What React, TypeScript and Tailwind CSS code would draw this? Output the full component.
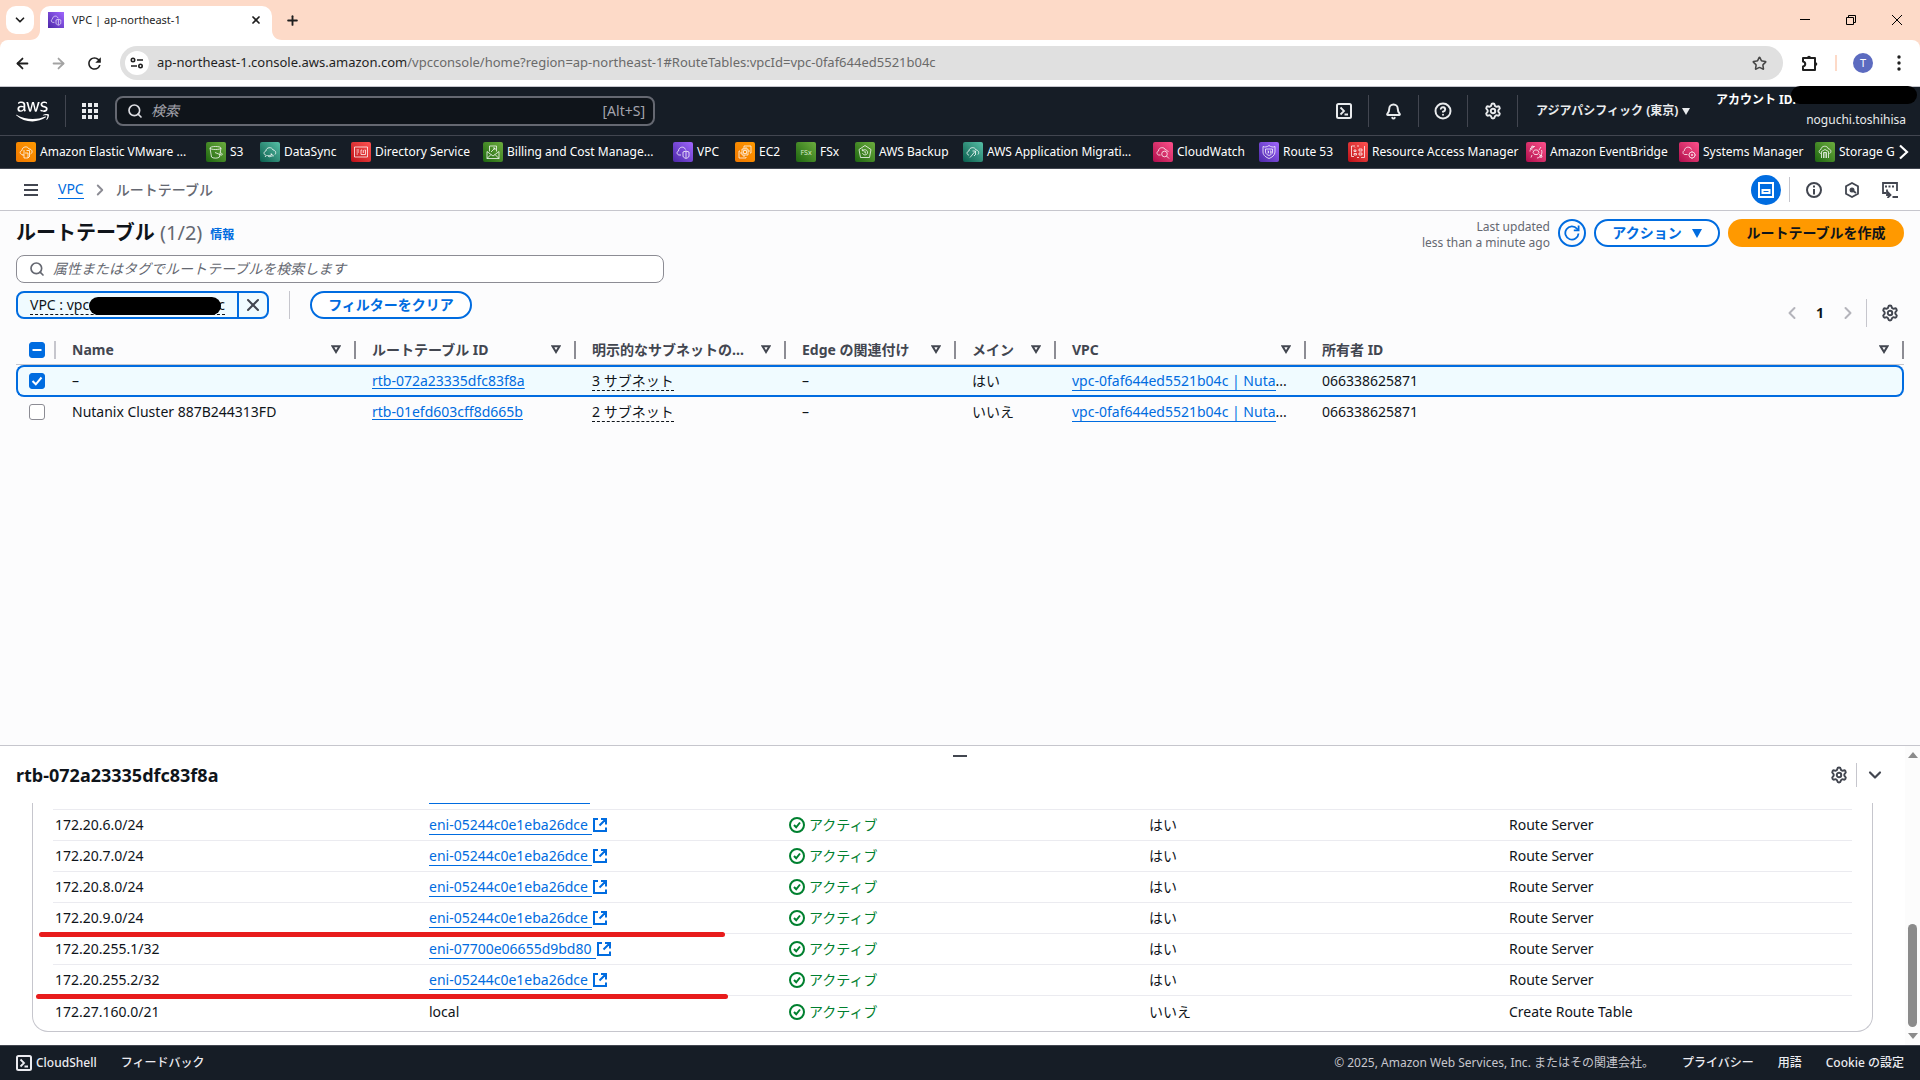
import React from "react";
import {
  ArrowLeft,
  ArrowRight,
  Bell,
  ChevronDown,
  ChevronLeft,
  ChevronRight,
  CircleHelp,
  Plus,
  Search,
  Settings,
  Star,
  X,
} from "lucide-react";
import { FaAws } from "react-icons/fa6";
import { MdRefresh } from "react-icons/md";
import clsx from "clsx";

const ORANGE = "from-[#f07800] to-[#ff9900]";
const GREEN = "from-[#1b660f] to-[#6cae3e]";
const TEAL = "from-[#055f4e] to-[#56c0a7]";
const RED = "from-[#bd0816] to-[#ff5252]";
const PURPLE = "from-[#4d27a8] to-[#a166ff]";
const PINK = "from-[#b0084d] to-[#ff4f8b]";

const CLOUD = "M6 13H5.5C3.5 12.5 3.5 9.500 6 9C6 5 12 4.500 13 8C15.500 8 16.500 11 15 12.500";

const services = [
  {
    name: "Amazon Elastic VMware ...",
    color: ORANGE,
    width: "w-[190px]",
    glyph: (
      <>
        <path d="M6.500 12.500H6C3.500 12 3.500 9 6 8.500C6 4.500 11.500 3.500 13 7C16.500 7 17 11 14.500 12" />
        <path d="M8 8V16H12V11H9M10.500 8.500H13.500V14M8 13H6M12 16L14 14" />
      </>
    ),
  },
  {
    name: "S3",
    color: GREEN,
    width: "w-[54px]",
    glyph: (
      <>
        <path d="M4 6C4 4 15 4 15 6C15 8 4 8 4 6ZM4 6L5.500 15C6.500 16.500 12.500 16.500 13.500 15L15 6" />
        <path d="M9 10.500L15 13C17 13.500 16.500 11.500 14.500 10.500" />
      </>
    ),
  },
  {
    name: "DataSync",
    color: TEAL,
    width: "w-[91px]",
    glyph: (
      <>
        <path d={CLOUD} />
        <path d="M5 15C7 11.500 9 16 12 12M10.500 12H12V13.500M8 14C10 16 12 13 14 14" />
      </>
    ),
  },
  {
    name: "Directory Service",
    color: RED,
    width: "w-[132px]",
    glyph: (
      <>
        <path d="M3.500 5H16.500V15H3.500ZM5.500 8H8M5.500 10H8M5.500 12H7" />
        <path d="M10 8V12.500H14.500V8M12.300 8V11M10 8H11M14.500 8H13.500" />
      </>
    ),
  },
  {
    name: "Billing and Cost Manage...",
    color: GREEN,
    width: "w-[190px]",
    glyph: (
      <>
        <path d="M4 9.500V16.500H16V9.500L10 14ZM4 16.500L8 12.500M16 16.500L12 12.500" />
        <path d="M6.500 9.500V4H13.500V9.500M8 10L12 6M10 6H12V8" />
      </>
    ),
  },
  {
    name: "VPC",
    color: PURPLE,
    width: "w-[62px]",
    glyph: (
      <>
        <path d="M8 13H6C3.500 12.500 3.500 9.500 5.500 9C5.500 5 11 3.500 12.500 7.500" />
        <path d="M10 10L13 9L16 10V14C16 15.500 14 16 13 16.500C12 16 10 15.500 10 14ZM13 9V16" />
      </>
    ),
  },
  {
    name: "EC2",
    color: ORANGE,
    width: "w-[61px]",
    glyph: (
      <>
        <path d="M7 7H13V13H7ZM8.500 8.500H11.500V11.500H8.500Z" />
        <path d="M9 5V4H16V11H15M5 9H4V16H11V15M9 5V7M11 5V7M5 11H7M9 13V15M13 9H15" />
      </>
    ),
  },
  {
    name: "FSx",
    color: GREEN,
    width: "w-[59px]",
    glyph: (
      <text x="10" y="12.500" textAnchor="middle" fontSize="7" fill="#d5e9c8" stroke="none">
        FSx
      </text>
    ),
  },
  {
    name: "AWS Backup",
    color: GREEN,
    width: "w-[108px]",
    glyph: (
      <>
        <path d="M10 3.500L16 7.500L14.500 15.500H5.500L4 7.500Z" />
        <path d="M7.500 8.500C10 6.500 13 8.500 12.500 11C12 13.500 8 13.500 7.500 11M7.300 6.800V8.800H9.300M10 9V11H11" />
      </>
    ),
  },
  {
    name: "AWS Application Migrati...",
    color: TEAL,
    width: "w-[190px]",
    glyph: (
      <>
        <path d={CLOUD} />
        <path d="M7 15.500L12 9.500M9.500 9H12.500V12M11 14L13 12" />
      </>
    ),
  },
  {
    name: "CloudWatch",
    color: PINK,
    width: "w-[106px]",
    glyph: (
      <>
        <path d="M7.500 13H5.500C3.500 12.500 3.500 9.500 5.500 9C5.500 5 11.500 4.500 12.500 8C14 8 15 9 15.300 10" />
        <circle cx="11.500" cy="12" r="2.800" />
        <path d="M13.500 14L16 16.500" />
      </>
    ),
  },
  {
    name: "Route 53",
    color: PURPLE,
    width: "w-[89px]",
    glyph: (
      <>
        <path d="M4 4.500C6 5.500 8 5 10 3.500C12 5 14 5.500 16 4.500V10C16 13.500 12.500 15.500 10 16.500C7.500 15.500 4 13.500 4 10Z" />
        <path d="M6.500 7H13.500V10C13.500 12 11.500 13 10 13.500C8.500 13 6.500 12 6.500 10ZM8.500 9H9.500V11H8.500M11 9H12V11H11" />
      </>
    ),
  },
  {
    name: "Resource Access Manager",
    color: RED,
    width: "w-[178px]",
    glyph: (
      <>
        <path d="M3.500 14.500V4H7M16.500 4V15.500H13M9 4H11M3.500 14.500H6M9 15.500H11" />
        <path d="M6 8H8V9.500H6ZM11 7H14V9H11ZM11 11H14V13H11ZM6 11.500H8.500V13H6ZM7 6V5.500" />
      </>
    ),
  },
  {
    name: "Amazon EventBridge",
    color: PINK,
    width: "w-[153px]",
    glyph: (
      <>
        <path d="M8.500 8H11.500L13 10.300L11.500 12.500H8.500L7 10.300Z" />
        <path d="M4 6L6.500 8M6 13L5 15.500M15 5L13 8M13 12.500L16 14M9 4.500C6 4 4 7 4 9.500M15.500 8C17 12 14 16 11 16" />
        <circle cx="6.500" cy="5" r="1" />
        <circle cx="15" cy="14.500" r="1" />
      </>
    ),
  },
  {
    name: "Systems Manager",
    color: PINK,
    width: "w-[136px]",
    glyph: (
      <>
        <path d="M8.500 12.500H5.500C3.500 12 3.500 9 5.500 8.500C5.500 4.500 11.500 4 12.500 7.500" />
        <circle cx="13" cy="13" r="3" />
        <path d="M13 9V10M13 16V17M9.500 13H10M16 13H17M12 13H14M13 12V14" />
      </>
    ),
  },
  {
    name: "Storage G",
    color: GREEN,
    width: "w-[80px]",
    glyph: (
      <>
        <path d="M6 11.500C3.500 11 3.500 8 6 7.500C6 3.500 12.500 3 13.500 7C16.500 7 16.500 11 14.500 11.500" />
        <path d="M6.500 16V9.500L10 7.500L13.500 9.500V16M8.500 16V10.500H11.500V16M10 10.500V16" />
      </>
    ),
  },
];

const columns = [
  { label: "Name", width: "w-[300px]" },
  { label: "ルートテーブル ID", width: "w-[220px]" },
  { label: "明示的なサブネットの…", width: "w-[210px]" },
  { label: "Edge の関連付け", width: "w-[170px]" },
  { label: "メイン", width: "w-[100px]" },
  { label: "VPC", width: "w-[250px]" },
  { label: "所有者 ID", width: "" },
];

const routeTables = [
  { name: "–", id: "rtb-072a23335dfc83f8a", subnets: "3 サブネット", main: "はい", selected: true },
  {
    name: "Nutanix Cluster 887B244313FD",
    id: "rtb-01efd603cff8d665b",
    subnets: "2 サブネット",
    main: "いいえ",
    selected: false,
  },
];

const routes = [
  { dest: "172.20.6.0/24", target: "eni-05244c0e1eba26dce" },
  { dest: "172.20.7.0/24", target: "eni-05244c0e1eba26dce" },
  { dest: "172.20.8.0/24", target: "eni-05244c0e1eba26dce" },
  { dest: "172.20.9.0/24", target: "eni-05244c0e1eba26dce" },
  { dest: "172.20.255.1/32", target: "eni-07700e06655d9bd80" },
  { dest: "172.20.255.2/32", target: "eni-05244c0e1eba26dce" },
  { dest: "172.27.160.0/21", target: "local" },
];

function ServiceIcon({ color, glyph, className }: { color: string; glyph: React.ReactNode; className?: string }) {
  return (
    <span className={clsx("block shrink-0 bg-linear-to-tr", color, className ?? "size-5 rounded-xs")}>
      <svg viewBox="0 0 20 20" className="size-full" fill="none" stroke="#fff" strokeOpacity="0.85" strokeWidth="0.9">
        {glyph}
      </svg>
    </span>
  );
}

function TerminalIcon({ className }: { className: string }) {
  return (
    <svg viewBox="0 0 16 16" className={className} fill="none" stroke="currentColor" strokeWidth="2">
      <rect x="1" y="1" width="14" height="14" rx="1.500" />
      <path d="M4.500 4.500L8 8L4.500 11.500M8.500 11.500H12" strokeWidth="1.800" />
    </svg>
  );
}

function RefreshIcon() {
  return (
    <svg viewBox="0 0 16 16" className="size-4" fill="none" stroke="currentColor" strokeWidth="1.800">
      <path d="M14.500 8.500A6.600 6.600 0 1 1 13 3.800L14 5" />
      <path d="M14.600 0.500V5.300H9.800" />
    </svg>
  );
}

function ExternalIcon() {
  return (
    <svg viewBox="0 0 16 16" className="size-4" fill="none" stroke="currentColor" strokeWidth="2">
      <path d="M6 2H2V14H14V10.500M9 2H14V7.500M14 2L7.500 8.500" />
    </svg>
  );
}

function StatusIcon() {
  return (
    <svg viewBox="0 0 16 16" className="size-4" fill="none" stroke="currentColor" strokeWidth="2">
      <circle cx="8" cy="8" r="7" />
      <path d="M5 8L7.200 10.300L11 5.500" />
    </svg>
  );
}

function BrowserChrome() {
  return (
    <header className="bg-[#fddac8] text-[#1f1f1f]">
      <div className="flex h-10 items-end">
        <button aria-label="タブを検索" className="mx-1.5 mb-1.5 flex size-7 items-center justify-center rounded-[10px] bg-white">
          <ChevronDown size={14} strokeWidth={3} />
        </button>
        <div className="relative flex h-[34px] w-[232px] items-center rounded-t-[10px] bg-white pr-2 pb-1.5 pl-2">
          <svg viewBox="0 0 10 10" className="absolute bottom-0 -left-[10px] size-[10px]" fill="#fff">
            <path d="M10 0V10H0C6 10 10 6 10 0Z" />
          </svg>
          <svg viewBox="0 0 10 10" className="absolute -right-[10px] bottom-0 size-[10px]" fill="#fff">
            <path d="M0 0V10H10C4 10 0 6 0 0Z" />
          </svg>
          <ServiceIcon color={PURPLE} glyph={services[5].glyph} className="size-4" />
          <span className="ml-2 flex-1 text-[11px]">VPC | ap-northeast-1</span>
          <button aria-label="閉じる" className="flex size-4 items-center justify-center">
            <X size={12} strokeWidth={3.5} />
          </button>
        </div>
        <button aria-label="新しいタブ" className="mb-3 ml-3 flex size-4 items-center justify-center">
          <Plus size={15} strokeWidth={3} />
        </button>
        <div className="ml-auto flex h-10 items-center text-black">
          <button aria-label="最小化" className="flex w-[46px] justify-center">
            <svg viewBox="0 0 10 10" className="size-[10px]" stroke="currentColor">
              <path d="M0 4.500H10" />
            </svg>
          </button>
          <button aria-label="元に戻す" className="flex w-[46px] justify-center">
            <svg viewBox="0 0 10 10" className="size-[10px]" fill="none" stroke="currentColor">
              <path d="M0.500 2.500H7.500V9.500H0.500ZM2.500 2.500V0.500H9.500V7.500H7.500" />
            </svg>
          </button>
          <button aria-label="ウィンドウを閉じる" className="flex w-[46px] justify-center">
            <svg viewBox="0 0 10 10" className="size-[10px]" stroke="currentColor">
              <path d="M0 0L10 10M10 0L0 10" />
            </svg>
          </button>
        </div>
      </div>
      <div className="flex h-[46px] items-center rounded-t-lg bg-white pr-3 pl-[13px]">
        <button aria-label="戻る" className="flex w-[19px] justify-center">
          <ArrowLeft size={17} strokeWidth={2.5} />
        </button>
        <button aria-label="進む" className="ml-[17px] flex w-[19px] justify-center text-[#a3a3a3]">
          <ArrowRight size={17} strokeWidth={2.5} />
        </button>
        <button aria-label="再読み込み" className="ml-[17px] flex w-[19px] justify-center">
          <MdRefresh size={19} />
        </button>
        <div className="ml-4 flex h-[34px] flex-1 items-center rounded-full bg-[#e0e0e0] pr-4 pl-[5px]">
          <span className="flex size-6 items-center justify-center rounded-full bg-white">
            <svg viewBox="0 0 14 14" className="size-[14px]" fill="none" stroke="currentColor" strokeWidth="1.600">
              <circle cx="3" cy="4" r="1.700" />
              <circle cx="10.500" cy="10" r="1.700" />
              <path d="M7 4H13M1 10H7" />
            </svg>
          </span>
          <p className="ml-2 flex-1 text-[13px] text-[#6a6a6a]">
            <span className="text-[#1f1f1f]">ap-northeast-1.console.aws.amazon.com</span>
            /vpcconsole/home?region=ap-northeast-1#RouteTables:vpcId=vpc-0faf644ed5521b04c
          </p>
          <button aria-label="ブックマーク" className="text-[#474747]">
            <Star size={15} strokeWidth={2.5} />
          </button>
        </div>
        <button aria-label="拡張機能" className="ml-[18px]">
          <svg viewBox="0 0 18 18" className="size-[18px]" fill="none" stroke="currentColor" strokeWidth="2" strokeLinejoin="round">
            <path d="M2 4H14V16H2V12.500C5 12 5 8 2 7.500Z" />
            <path d="M6 4C6 1 10 1 10 4ZM14 8C17 8 17 12 14 12Z" fill="currentColor" stroke="none" />
          </svg>
        </button>
        <span className="ml-4 h-4 w-0.5 bg-[#fddac8]" />
        <button className="ml-4 flex size-5 items-center justify-center rounded-full bg-[#5c6bc0] text-[11px] text-white">T</button>
        <button aria-label="メニュー" className="ml-[17px] flex w-[18px] justify-center">
          <svg viewBox="0 0 4 16" className="h-4 w-1" fill="currentColor">
            <circle cx="2" cy="2" r="1.700" />
            <circle cx="2" cy="8" r="1.700" />
            <circle cx="2" cy="14" r="1.700" />
          </svg>
        </button>
      </div>
    </header>
  );
}

function AwsNav() {
  return (
    <nav className="border-t border-[#c6c6cd] bg-[#161d26] text-[#e9ebed]">
      <div className="relative flex h-12 items-center">
        <a href="#home" aria-label="AWS" className="ml-4 text-white">
          <FaAws size={33} />
        </a>
        <span className="ml-4 h-8 w-px bg-[#424650]" />
        <button aria-label="サービス" className="ml-4">
          <svg viewBox="0 0 16 16" className="size-4" fill="#e9ebed">
            <path d="M0 0H4V4H0ZM6 0H10V4H6ZM12 0H16V4H12ZM0 6H4V10H0ZM6 6H10V10H6ZM12 6H16V10H12ZM0 12H4V16H0ZM6 12H10V16H6ZM12 12H16V16H12Z" />
          </svg>
        </button>
        <label className="ml-[17px] flex h-[30px] w-[540px] items-center rounded-lg border-2 border-[#656871] bg-[#0f141a] pr-2 pl-2.5">
          <Search size={16} strokeWidth={2.5} className="text-[#dedee3]" />
          <input
            aria-label="検索"
            placeholder="検索"
            className="ml-2 min-w-0 flex-1 bg-transparent text-sm outline-none placeholder:text-[#a4a4ad] placeholder:italic"
          />
          <span className="text-sm text-[#a4a4ad]">[Alt+S]</span>
        </label>
        <div className="ml-auto flex h-8 items-center">
          <button aria-label="CloudShell" className="flex h-8 w-[50px] items-center justify-center border-r border-[#424650]">
            <TerminalIcon className="size-4" />
          </button>
          <button aria-label="通知" className="flex h-8 w-[50px] items-center justify-center border-r border-[#424650]">
            <Bell size={17} strokeWidth={2.8} />
          </button>
          <button aria-label="ヘルプ" className="flex h-8 w-[49px] items-center justify-center border-r border-[#424650]">
            <CircleHelp size={18} strokeWidth={2.6} />
          </button>
          <button aria-label="設定" className="flex h-8 w-[50px] items-center justify-center border-r border-[#424650]">
            <Settings size={18} strokeWidth={2.6} />
          </button>
          <button className="ml-[18px] flex w-[156px] items-center gap-1 text-xs font-bold whitespace-nowrap">
            アジアパシフィック (東京)
            <svg viewBox="0 0 8 7" className="h-[7px] w-2 shrink-0" fill="currentColor">
              <path d="M0 0H8L4 7Z" />
            </svg>
          </button>
          <div className="mr-[14px] mb-0.5 ml-6 flex w-[190px] flex-col text-xs leading-5">
            <span className="font-bold text-white">アカウント ID:</span>
            <span className="self-end">noguchi.toshihisa</span>
          </div>
        </div>
        <span className="absolute -top-px right-[3px] h-[18px] w-[126px] rounded-full bg-black" />
      </div>
      <div className="flex h-[34px] items-center overflow-hidden border-y border-[#424650] pl-4">
        {services.map((s) => (
          <a key={s.name} href="#service" className={clsx("flex shrink-0 items-center gap-1 text-xs whitespace-nowrap text-white", s.width)}>
            <ServiceIcon color={s.color} glyph={s.glyph} />
            {s.name}
          </a>
        ))}
        <button aria-label="次へ" className="shrink-0 text-white">
          <svg viewBox="0 0 10 16" className="ml-1 h-4 w-2.5" fill="none" stroke="currentColor" strokeWidth="2.200">
            <path d="M1 1.500L8 8L1 14.500" />
          </svg>
        </button>
      </div>
    </nav>
  );
}

function Breadcrumbs() {
  return (
    <div className="flex h-[42px] items-center border-b border-[#c6c6cd] bg-white pr-[22px] pl-6 text-[#424650]">
      <button aria-label="ナビゲーションを開く">
        <svg viewBox="0 0 14 12" className="h-3 w-3.5" stroke="currentColor" strokeWidth="2">
          <path d="M0 1H14M0 6H14M0 11H14" />
        </svg>
      </button>
      <a href="#vpc" className="ml-5 border-b border-[#006ce0] text-sm leading-[18px] text-[#006ce0]">
        VPC
      </a>
      <ChevronRight size={18} strokeWidth={2.5} className="mr-[7px] ml-[7px] text-[#8c8c94]" />
      <span className="text-sm font-medium text-[#656871]">ルートテーブル</span>
      <button aria-label="分割パネル" className="ml-auto flex size-[30px] items-center justify-center rounded-full bg-[#006ce0] text-white">
        <svg viewBox="0 0 16 16" className="size-4" fill="none" stroke="currentColor" strokeWidth="2">
          <path d="M1 1H15V15H1ZM4.500 8H11.500V11H4.500Z" />
        </svg>
      </button>
      <span className="ml-2 h-[25px] w-px bg-[#c6c6cd]" />
      <button aria-label="情報" className="ml-4">
        <svg viewBox="0 0 16 16" className="size-4" fill="none" stroke="currentColor" strokeWidth="2">
          <circle cx="8" cy="8" r="7" />
          <path d="M8 3.500V5.500M8 7V12.500" />
        </svg>
      </button>
      <button aria-label="診断" className="ml-[22px]">
        <svg viewBox="0 0 16 16" className="size-4" fill="none" stroke="currentColor" strokeWidth="1.800">
          <path d="M8 1L14 4.300V11.700L8 15L2 11.700V4.300Z" />
          <circle cx="8" cy="8" r="2.500" fill="currentColor" stroke="none" />
          <path d="M8 8L12 11" />
        </svg>
      </button>
      <button aria-label="コンソール操作" className="ml-[22px]">
        <svg viewBox="0 0 16 16" className="size-4" fill="none" stroke="currentColor" strokeWidth="1.800">
          <path d="M4 11H1V1H15V9M3 4.500H5M6.500 4.500H8.500M10 4.500H12M5 7.500V13H8M5.500 10L8.500 13L5.500 16M10.500 15H16" />
        </svg>
      </button>
    </div>
  );
}

function SelectBox({ label, mixed, checked }: { label: string; mixed?: boolean; checked?: boolean }) {
  const on = mixed || checked;
  return (
    <span className="relative block size-4">
      <input
        type="checkbox"
        aria-label={label}
        defaultChecked={on}
        className="block size-4 appearance-none rounded-[3px] border border-[#8c8c94] bg-white checked:border-[#006ce0] checked:bg-[#006ce0]"
      />
      {on && (
        <svg viewBox="0 0 16 16" className="pointer-events-none absolute inset-0 size-4" fill="none" stroke="#fff" strokeWidth="2">
          <path d={mixed ? "M3.500 8H12.500" : "M3.500 8L6.800 11.300L12.500 4.500"} />
        </svg>
      )}
    </span>
  );
}

function RouteTableList() {
  return (
    <table className="mt-2 w-full table-fixed border-separate border-spacing-0 text-left text-sm">
      <thead>
        <tr className="text-[#424650]">
          <th className="h-[30px] w-10 border-b border-[#c6c6cd] p-0 pl-[13px]">
            <div className="flex h-[18px] items-center border-r-2 border-[#c6c6cd]">
              <SelectBox label="すべて選択" mixed />
            </div>
          </th>
          {columns.map((c) => (
            <th key={c.label} className={clsx("h-[30px] border-b border-[#c6c6cd] p-0 pl-4", c.width)}>
              <div className="flex h-[18px] items-center justify-between border-r-2 border-[#8c8c94] pr-[13px] font-bold">
                <span className="whitespace-nowrap">{c.label}</span>
                <svg viewBox="0 0 10 9" className="h-[9px] w-2.5" fill="none" stroke="currentColor" strokeWidth="2">
                  <path d="M1.500 1.200H8.500L5 7Z" />
                </svg>
              </div>
            </th>
          ))}
        </tr>
      </thead>
      <tbody>
        {routeTables.map((r) => {
          const cell = clsx("p-0 pl-4 whitespace-nowrap", r.selected ? "h-8 border-y-2 border-[#006ce0] bg-[#f0fbff]" : "h-[30px]");
          return (
            <tr key={r.id} className="text-[#0f141a]">
              <td
                className={clsx(
                  "p-0",
                  r.selected ? "h-8 rounded-l-lg border-y-2 border-l-2 border-[#006ce0] bg-[#f0fbff] pl-[11px]" : "h-[30px] pl-[13px]",
                )}
              >
                <SelectBox label={r.id} checked={r.selected} />
              </td>
              <td className={cell}>{r.name}</td>
              <td className={cell}>
                <a href="#rtb" className="text-[#006ce0] underline underline-offset-2">
                  {r.id}
                </a>
              </td>
              <td className={cell}>
                <button className="border-b border-dashed border-[#0f141a] leading-[18px]">{r.subnets}</button>
              </td>
              <td className={cell}>–</td>
              <td className={cell}>{r.main}</td>
              <td className={cell}>
                <a href="#vpc" className="inline-block border-b border-[#006ce0] leading-[18px] text-[#006ce0]">
                  vpc-0faf644ed5521b04c | Nuta
                </a>
                ...
              </td>
              <td className={clsx(cell, r.selected && "rounded-r-lg border-r-2")}>066338625871</td>
            </tr>
          );
        })}
      </tbody>
    </table>
  );
}

function RouteTablesPage() {
  return (
    <main className="flex-1 px-4 pt-2">
      <div className="flex h-7 items-center">
        <h1 className="text-xl font-bold text-[#0f141a]">
          ルートテーブル <span className="font-normal text-[#656871]">(1/2)</span>
        </h1>
        <a href="#info" className="mt-1 ml-2 text-xs font-bold text-[#006ce0]">
          情報
        </a>
        <p className="mt-1 ml-auto text-right text-xs text-[#656871]">
          Last updated
          <br />
          less than a minute ago
        </p>
        <button aria-label="更新" className="ml-2 flex size-7 items-center justify-center rounded-full border-2 border-[#006ce0] text-[#006ce0]">
          <RefreshIcon />
        </button>
        <button className="ml-2 flex h-7 w-[126px] items-center justify-center gap-2.5 rounded-full border-2 border-[#006ce0] bg-white text-sm font-bold text-[#006ce0]">
          アクション
          <svg viewBox="0 0 10 9" className="h-[9px] w-2.5" fill="currentColor">
            <path d="M0 0H10L5 9Z" />
          </svg>
        </button>
        <button className="ml-2 h-7 w-[176px] rounded-full bg-[#ff9900] text-sm font-bold text-[#0f141a]">ルートテーブルを作成</button>
      </div>

      <div className="mt-2 flex items-end justify-between">
        <div className="flex flex-col gap-2 pb-2">
          <label className="flex h-7 w-[648px] items-center rounded-lg border border-[#8c8c94] bg-white pl-3">
            <Search size={16} strokeWidth={2.5} className="text-[#656871]" />
            <input
              aria-label="ルートテーブルを検索"
              placeholder="属性またはタグでルートテーブルを検索します"
              className="ml-2 min-w-0 flex-1 bg-transparent text-sm outline-none placeholder:text-[#656871] placeholder:italic"
            />
          </label>
          <div className="flex items-center">
            <div className="flex h-7 w-[253px] rounded-lg border-2 border-[#006ce0] bg-[#f0fbff] text-[#0f141a]">
              <button className="relative ml-3 flex h-[22px] w-[195px] justify-between border-b border-dashed border-[#0f141a] text-sm leading-6">
                <span>VPC : vpc</span>
                <span>c</span>
                <span className="absolute top-1 left-[59px] h-[18px] w-[132px] rounded-full bg-black" />
              </button>
              <button aria-label="フィルターを削除" className="ml-auto flex w-[30px] items-center justify-center border-l-2 border-[#006ce0] text-[#424650]">
                <X size={20} strokeWidth={2.4} />
              </button>
            </div>
            <span className="mx-5 h-7 w-px bg-[#c6c6cd]" />
            <button className="h-7 w-[162px] rounded-full border-2 border-[#006ce0] bg-white text-sm font-bold text-[#006ce0]">
              フィルターをクリア
            </button>
          </div>
        </div>
        <div className="flex h-7 items-center pr-[5px]">
          <button aria-label="前のページ" className="text-[#b4b4bb]">
            <ChevronLeft size={20} strokeWidth={2.4} />
          </button>
          <button className="w-9 text-sm font-bold text-[#0f141a]">1</button>
          <button aria-label="次のページ" className="text-[#b4b4bb]">
            <ChevronRight size={20} strokeWidth={2.4} />
          </button>
          <span className="mr-[14px] ml-2 h-7 w-px bg-[#c6c6cd]" />
          <button aria-label="設定" className="text-[#424650]">
            <Settings size={18} strokeWidth={2.6} />
          </button>
        </div>
      </div>

      <RouteTableList />
    </main>
  );
}

function DetailPanel() {
  return (
    <section className="relative flex h-[300px] border-t border-[#c6c6cd] bg-white text-[#0f141a]">
      <div className="flex flex-1 flex-col">
        <button aria-label="パネルのサイズを変更" className="flex h-5 justify-center pt-[9px] pl-[15px]">
          <span className="h-0.5 w-3.5 bg-[#424650]" />
        </button>
        <div className="flex h-[37px] items-center pr-5 pb-5 pl-4">
          <h2 className="flex-1 text-lg leading-4 font-bold">rtb-072a23335dfc83f8a</h2>
          <button aria-label="設定" className="text-[#424650]">
            <Settings size={18} strokeWidth={2.6} />
          </button>
          <span className="mx-2 h-6 w-px bg-[#c6c6cd]" />
          <button aria-label="パネルを閉じる" className="text-[#424650]">
            <ChevronDown size={20} strokeWidth={2.6} />
          </button>
        </div>
        <div className="mr-8 ml-8 rounded-b-2xl border-x border-b border-[#c6c6cd] px-5 pb-1">
          <table className="w-full table-fixed border-separate border-spacing-0 text-sm">
            <tbody>
              <tr>
                <td className="h-[7px] w-[376px] border-b border-[#ebebf0] p-0" />
                <td className="h-[7px] w-[360px] border-b border-[#ebebf0] p-0 align-top">
                  <div className="h-1.5 w-[161px] border-t border-[#006ce0]" />
                </td>
                <td className="w-[360px] border-b border-[#ebebf0] p-0" />
                <td className="w-[360px] border-b border-[#ebebf0] p-0" />
                <td className="border-b border-[#ebebf0] p-0" />
              </tr>
              {routes.map((r, i) => {
                const isLast = i === routes.length - 1;
                const cell = clsx("h-[31px] p-0", !isLast && "border-b border-[#ebebf0]");
                return (
                  <tr key={r.dest}>
                    <td className={clsx(cell, "pl-0.5")}>{r.dest}</td>
                    <td className={cell}>
                      {isLast ? (
                        r.target
                      ) : (
                        <a href="#eni" className="flex items-center text-[#006ce0]">
                          <span className="border-b border-[#006ce0] pr-1 leading-[18px]">{r.target}</span>
                          <ExternalIcon />
                        </a>
                      )}
                    </td>
                    <td className={cell}>
                      <span className="flex items-center gap-1 text-[#00802f]">
                        <StatusIcon />
                        アクティブ
                      </span>
                    </td>
                    <td className={cell}>{isLast ? "いいえ" : "はい"}</td>
                    <td className={cell}>{isLast ? "Create Route Table" : "Route Server"}</td>
                  </tr>
                );
              })}
            </tbody>
          </table>
        </div>
      </div>
      {/* Scrollbar */}
      <div className="flex w-[15px] flex-col items-center justify-between bg-[#fcfcfc] py-1.5">
        <svg viewBox="0 0 10 6" className="h-1.5 w-2.5" fill="#8b8b8b">
          <path d="M0 6H10L5 0Z" />
        </svg>
        <div className="mt-auto mb-1.5 h-[103px] w-[9px] rounded-full bg-[#8b8b8b]" />
        <svg viewBox="0 0 10 6" className="h-1.5 w-2.5" fill="#8b8b8b">
          <path d="M0 0H10L5 6Z" />
        </svg>
      </div>
      {/* Highlight strokes */}
      <span className="absolute bottom-[108px] left-[39px] h-[5px] w-[686px] rounded-full bg-[#e81c1c]" />
      <span className="absolute bottom-[46px] left-9 h-[5px] w-[692px] rounded-full bg-[#e81c1c]" />
    </section>
  );
}

function Footer() {
  return (
    <footer className="flex h-[35px] items-center border-t border-[#424650] bg-[#161d26] px-4 text-xs font-medium text-[#ebebf0]">
      <button className="flex items-center gap-1">
        <TerminalIcon className="size-4" />
        CloudShell
      </button>
      <a href="#feedback" className="ml-6">
        フィードバック
      </a>
      <span className="mr-7 ml-auto font-normal text-[#c6c6cd]">© 2025, Amazon Web Services, Inc. またはその関連会社。</span>
      <a href="#privacy">プライバシー</a>
      <a href="#terms" className="mx-6">
        用語
      </a>
      <a href="#cookie">Cookie の設定</a>
    </footer>
  );
}

export default function App() {
  return (
    <div className="flex min-h-screen flex-col bg-[#fcfcfd] font-['Noto_Sans','Noto_Sans_CJK_JP',sans-serif]" lang="ja">
      <BrowserChrome />
      <AwsNav />
      <Breadcrumbs />
      <RouteTablesPage />
      <DetailPanel />
      <Footer />
    </div>
  );
}
